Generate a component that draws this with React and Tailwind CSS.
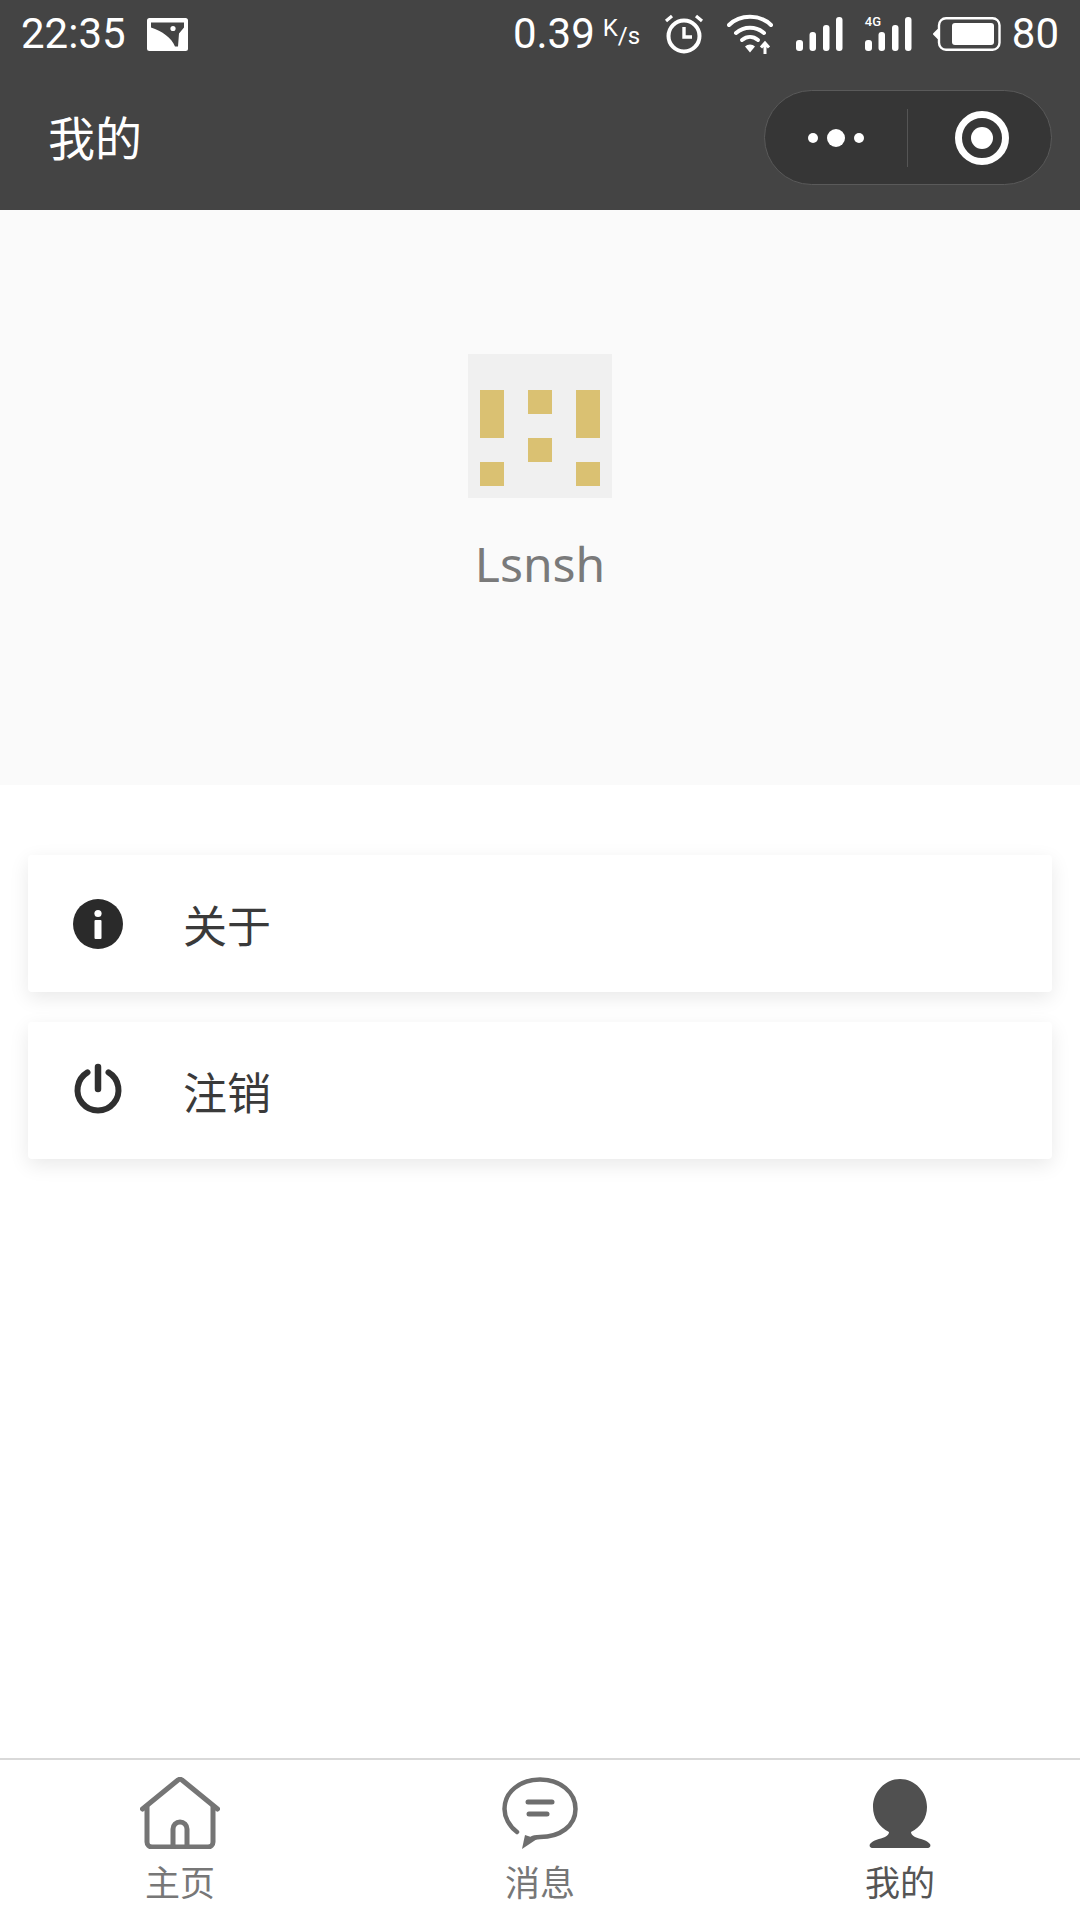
import React from "react";

const CJK = "font-['Noto_Sans_CJK_SC','Noto_Sans',sans-serif]";

function PictureNote() {
  return (
    <svg width="41" height="33" viewBox="0 0 41 33" className="block">
      <rect x="0" y="0" width="41" height="33" rx="2.500" fill="#fff" />
      <path d="M4 4.500h33v5l-5 6-1 13h-3C25 20 15 13 4 9.500z" fill="#444" />
      <circle cx="26" cy="10.500" r="2.600" fill="#fff" />
    </svg>
  );
}

function Alarm() {
  return (
    <svg width="42" height="42" viewBox="0 0 42 42" fill="none" stroke="#fff" className="block">
      <circle cx="21" cy="23" r="15.500" strokeWidth="4" />
      <path d="M21 14v10h8" strokeWidth="3.400" />
      <path d="M3 8l6-5M39 8l-6-5" strokeWidth="3.200" />
    </svg>
  );
}

function Wifi() {
  return (
    <svg width="48" height="42" viewBox="0 0 48 42" fill="none" stroke="#fff" strokeLinecap="round" className="block">
      <path d="M2 12C13 1 33 1 44 12" strokeWidth="4" />
      <path d="M9 20c8-7 20-7 28 0" strokeWidth="4" />
      <path d="M15 27c5-4 11-4 16 0" strokeWidth="4" />
      <path d="M18 33.500a7 7 0 0 1 10 0l-5 6z" fill="#fff" stroke="none" />
      <path d="M38 41V31M34 34.500l4-4.500 4 4.500" strokeWidth="3" strokeLinecap="butt" />
    </svg>
  );
}

function Signal() {
  return (
    <svg width="47" height="34" viewBox="0 0 47 34" fill="#fff" className="block">
      <rect x="0" y="23" width="7" height="11" rx="3" />
      <rect x="13.500" y="15" width="6.500" height="19" rx="3" />
      <rect x="27" y="8" width="6.500" height="26" rx="3" />
      <rect x="40" y="0" width="6.500" height="34" rx="3" />
    </svg>
  );
}

function Signal4G() {
  return (
    <div className="relative h-[34px] w-[47px]">
      <svg width="47" height="34" viewBox="0 0 47 34" fill="#fff" className="block">
        <rect x="0" y="23" width="7" height="11" rx="3" />
        <rect x="13.500" y="15" width="6.500" height="19" rx="3" />
        <rect x="27" y="8" width="6.500" height="26" rx="3" />
        <rect x="40" y="0" width="6.500" height="34" rx="3" />
      </svg>
      <span className="absolute left-0 top-[-2px] font-['Roboto',sans-serif] text-[13px] font-medium leading-[14px] text-white">4G</span>
    </div>
  );
}

function Battery() {
  return (
    <svg width="68" height="34" viewBox="0 0 68 34" fill="none" className="block">
      <path d="M5 13v8l-4-4z" fill="#fff" stroke="#fff" strokeWidth="2" strokeLinejoin="round" />
      <rect x="6" y="1.200" width="60.500" height="31.600" rx="7" stroke="#fff" strokeWidth="2.400" />
      <rect x="19" y="6" width="42" height="22" rx="3" fill="#fff" />
    </svg>
  );
}

function Logo() {
  return (
    <svg width="144" height="144" viewBox="0 0 144 144" className="block">
      <rect width="144" height="144" fill="#f0f0f0" />
      <g fill="#dac172">
        <rect x="12" y="36" width="24" height="48" />
        <rect x="60" y="36" width="24" height="24" />
        <rect x="60" y="84" width="24" height="24" />
        <rect x="108" y="36" width="24" height="48" />
        <rect x="12" y="108" width="24" height="24" />
        <rect x="108" y="108" width="24" height="24" />
      </g>
    </svg>
  );
}

function InfoIcon() {
  return (
    <svg width="50" height="50" viewBox="0 0 50 50" className="block">
      <circle cx="25" cy="25" r="25" fill="#2a2a2a" />
      <circle cx="25" cy="14.500" r="3.600" fill="#fff" />
      <rect x="21.500" y="21" width="7" height="19" rx="1" fill="#fff" />
    </svg>
  );
}

function PowerIcon() {
  return (
    <svg width="50" height="50" viewBox="0 0 50 50" fill="none" stroke="#2f2f2f" strokeLinecap="round" className="block overflow-visible">
      <path d="M14.500 6.400a20.500 20.500 0 1 0 21 0" strokeWidth="6" />
      <path d="M25 1v22" strokeWidth="6.500" />
    </svg>
  );
}

function HomeIcon() {
  return (
    <svg width="80" height="72" viewBox="0 0 80 72" fill="none" stroke="#757575" strokeWidth="5" strokeLinecap="round" strokeLinejoin="round" className="block">
      <path d="M2.500 32 38 3a3.500 3.500 0 0 1 4 0l35.500 29" />
      <path d="M7 30v35a5 5 0 0 0 5 5h56a5 5 0 0 0 5-5V30" />
      <path d="M33 70V52a7 7 0 0 1 14 0v18" />
    </svg>
  );
}

function MessageIcon() {
  return (
    <svg width="76" height="74" viewBox="0 -2 76 74" fill="none" stroke="#6e6e6e" strokeLinecap="round" className="block">
      <path d="M15 55C7 49 2.500 40 2.500 32 2.500 15 18 2.500 38 2.500S73.500 15 73.500 32 58 60 38 60c-3 0-6 0-9 2" strokeWidth="4.500" strokeLinejoin="round" />
      <path d="M26 25h24" strokeWidth="5" />
      <path d="M27 37h18" strokeWidth="5" />
      <path d="M20 72l3-14 12 4z" fill="#6e6e6e" stroke="none" />
    </svg>
  );
}

function PersonIcon() {
  return (
    <svg width="64" height="70" viewBox="0 0 64 70" className="block">
      <path
        d="M32 0C17 0 5 13 5 28c0 11 6 20 16 25 0 2-1 3-4 5-5 2-12 3-15 7-1 2 0 4 3 4h54c3 0 4-2 3-4-3-4-10-5-15-7-3-2-4-3-4-5 10-5 16-14 16-25C59 13 47 0 32 0z"
        fill="#505050"
      />
    </svg>
  );
}

function Card({ icon, label, className }) {
  return (
    <div className={`mx-[28px] flex h-[137px] items-center rounded-[4px] bg-white pl-[45px] shadow-[0_6px_20px_rgba(0,0,0,0.09)] ${className}`}>
      {icon}
      <span className={`ml-[60px] ${CJK} text-[44px] leading-none text-[#3a3a3a]`}>{label}</span>
    </div>
  );
}

function Tab({ icon, label, color }) {
  return (
    <div className="flex flex-1 flex-col items-center">
      <div className="flex h-[72px] items-end">{icon}</div>
      <span className={`mt-[12px] ${CJK} text-[35px] leading-[40px]`} style={{ color }}>{label}</span>
    </div>
  );
}

export default function App() {
  return (
    <div className="flex h-[1920px] w-[1080px] flex-col overflow-hidden bg-white">
      <header className="h-[210px] shrink-0 bg-[#444444] text-white">
        <div className="flex h-[68px] items-center pl-[21px] pr-[21px] font-['Roboto',sans-serif] font-[450]">
          <span className="text-[42px] leading-none">22:35</span>
          <span className="ml-[21px]"><PictureNote /></span>
          <span className="ml-auto text-[42px] leading-none">0.39</span>
          <span className="ml-[8px] flex h-[40px] w-[38px] items-start text-[24px] leading-[28px]">K<span className="text-[24px] leading-[44px]">/s</span></span>
          <span className="ml-[22px]"><Alarm /></span>
          <span className="ml-[22px]"><Wifi /></span>
          <span className="ml-[21px]"><Signal /></span>
          <span className="ml-[22px]"><Signal4G /></span>
          <span className="ml-[21px]"><Battery /></span>
          <span className="ml-[11px] text-[42px] leading-none">80</span>
        </div>
        <div className="flex h-[139px] items-center justify-between pl-[48px] pr-[28px]">
          <span className={`mb-[4px] ${CJK} text-[47px] leading-none`}>我的</span>
          <div className="flex h-[95px] w-[288px] items-center rounded-full border border-[#5a5a5a] bg-[#363636]">
            <div className="flex w-[142px] items-center justify-center gap-[9px]">
              <span className="h-[10px] w-[10px] rounded-full bg-white" />
              <span className="h-[18px] w-[18px] rounded-full bg-white" />
              <span className="h-[10px] w-[10px] rounded-full bg-white" />
            </div>
            <div className="h-[58px] w-px bg-[#555]" />
            <div className="flex flex-1 items-center justify-center pl-[4px]">
              <span className="flex h-[54px] w-[54px] items-center justify-center rounded-full border-[7px] border-white">
                <span className="h-[22px] w-[22px] rounded-full bg-white" />
              </span>
            </div>
          </div>
        </div>
      </header>

      <section className="flex h-[575px] shrink-0 flex-col items-center bg-[#fafafa] pt-[144px]">
        <Logo />
        <span className="mt-[33px] font-['Noto_Sans',sans-serif] text-[48px] leading-[66px] text-[#7a7a7a]">Lsnsh</span>
      </section>

      <main className="flex-1 pt-[70px]">
        <Card icon={<InfoIcon />} label="关于" />
        <Card icon={<PowerIcon />} label="注销" className="mt-[30px]" />
      </main>

      <nav className="flex h-[162px] shrink-0 border-t-2 border-[#d9d9d9] bg-white pt-[17px]">
        <Tab icon={<HomeIcon />} label="主页" color="#777" />
        <Tab icon={<MessageIcon />} label="消息" color="#777" />
        <Tab icon={<PersonIcon />} label="我的" color="#555" />
      </nav>
    </div>
  );
}
